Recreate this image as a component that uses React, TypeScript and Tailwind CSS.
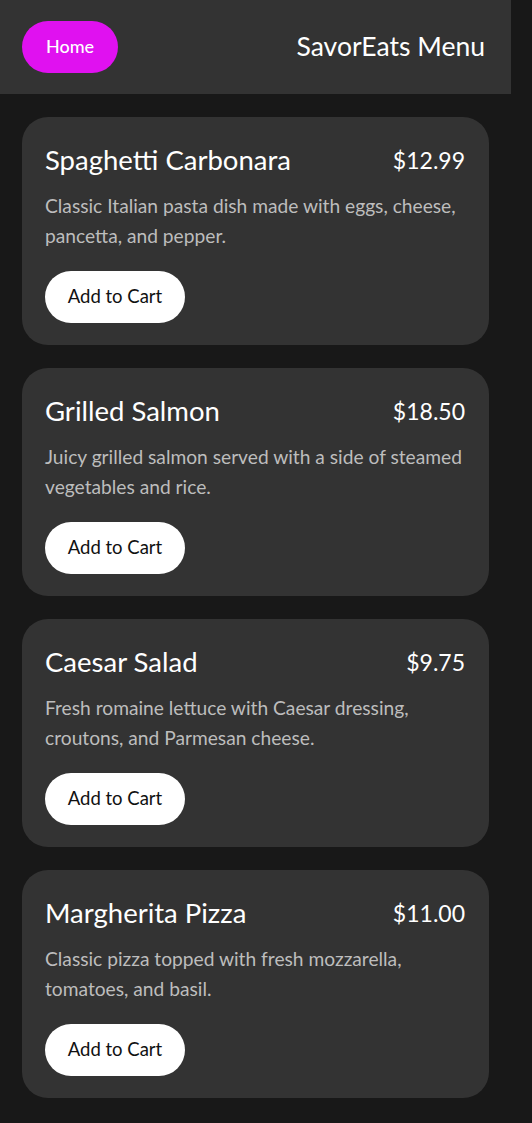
const items = [
  {
    name: "Spaghetti Carbonara",
    price: "$12.99",
    desc: "Classic Italian pasta dish made with eggs, cheese, pancetta, and pepper."
  },
  {
    name: "Grilled Salmon",
    price: "$18.50",
    desc: "Juicy grilled salmon served with a side of steamed vegetables and rice."
  },
  {
    name: "Caesar Salad",
    price: "$9.75",
    desc: "Fresh romaine lettuce with Caesar dressing, croutons, and Parmesan cheese."
  },
  {
    name: "Margherita Pizza",
    price: "$11.00",
    desc: "Classic pizza topped with fresh mozzarella, tomatoes, and basil."
  }
];

export default function App() {
  return (
    <div className="min-h-[1123px] bg-[#181818] font-['Lato',sans-serif]">
      <div className="w-[511px]">
        <header className="flex h-[94px] items-center justify-between bg-[#333333] pl-[22px] pr-[26px]">
          <button className="h-[52px] w-[96px] rounded-full bg-[#e011f0] pb-[1px] text-[18px] font-medium text-white">
            Home
          </button>
          <h1 className="text-[26.5px] text-white">SavorEats Menu</h1>
        </header>
        <main className="flex flex-col gap-[23px] px-[22px] pt-[23px] pb-[24px]">
          {items.map((item) => (
            <div
              key={item.name}
              className="rounded-[26px] bg-[#333333] pl-[23px] pr-[24px] pt-[23px] pb-[22px]">
              <div className="flex h-[40px] items-center justify-between">
                <h2 className="text-[27.5px] text-white">{item.name}</h2>
                <span className="text-[23px] text-white">{item.price}</span>
              </div>
              <p className="mt-[11px] text-[19.2px] leading-[30px] text-[#bdbdbd]">
                {item.desc}
              </p>
              <button className="mt-[20px] h-[52px] w-[140px] rounded-full bg-white text-[18.5px] text-[#111]">
                Add to Cart
              </button>
            </div>
          ))}
        </main>
      </div>
    </div>
  );
}
